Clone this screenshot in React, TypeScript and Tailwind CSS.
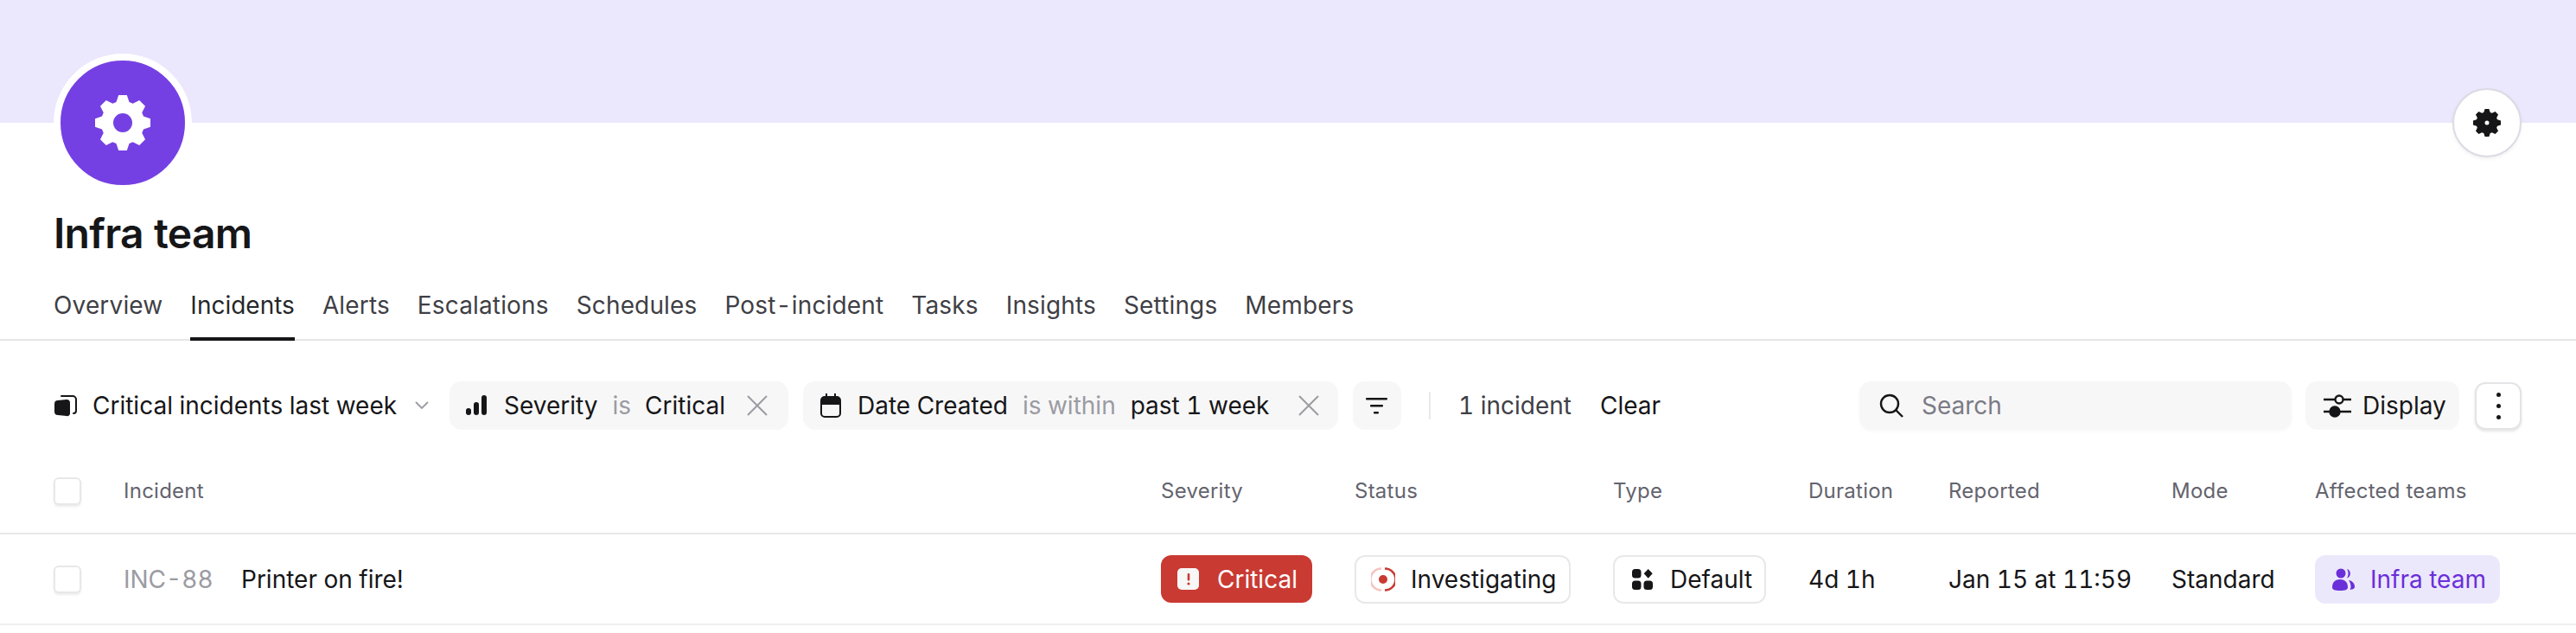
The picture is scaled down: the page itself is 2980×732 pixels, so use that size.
function gearPath(cx: number, cy: number, outer: number, root: number, tooth: number) {
  // 8 teeth, drawn clockwise from the top
  const pts: string[] = [];
  for (let i = 0; i < 8; i++) {
    const a = (i * Math.PI) / 4 - Math.PI / 2;
    const along = (r: number, s: number) => [
      cx + r * Math.cos(a) - s * Math.sin(a),
      cy + r * Math.sin(a) + s * Math.cos(a),
    ];
    [along(root, -tooth * 1.25), along(outer, -tooth * 0.8), along(outer, tooth * 0.8), along(root, tooth * 1.25)].forEach((p) =>
      pts.push(p.map((n) => n.toFixed(2)).join(" ")),
    );
  }
  return "M" + pts.join("L") + "Z";
}

function Gear({ className, hole }: { className: string; hole: number }) {
  return (
    <svg viewBox="0 0 64 64" className={className} fill="currentColor">
      <path fillRule="evenodd" d={gearPath(32, 32, 32, 24, 6) + ` M${32 - hole} 32a${hole} ${hole} 0 1 0 ${hole * 2} 0a${hole} ${hole} 0 1 0 ${-hole * 2} 0Z`} />
    </svg>
  );
}

function CloseIcon() {
  return (
    <svg viewBox="0 0 24 24" className="h-[24px] w-[24px] text-[#9b9ba3]" fill="none" stroke="currentColor" strokeWidth="2">
      <path d="M1 1l22 22M23 1L1 23" />
    </svg>
  );
}

function Checkbox() {
  return <div className="h-[32px] w-[32px] rounded-[6px] border-2 border-[#e8e8e8] bg-white shadow-[0_2px_3px_rgba(0,0,0,0.08)]" />;
}

const tabs = ["Overview", "Incidents", "Alerts", "Escalations", "Schedules", "Post-incident", "Tasks", "Insights", "Settings", "Members"];
const columns = ["Severity", "Status", "Type", "Duration", "Reported", "Mode", "Affected teams"];

export default function App() {
  return (
    <div className="h-[732px] w-[2980px] overflow-hidden bg-white font-[Inter,sans-serif] text-[28px] tabular-nums text-[#161618]">
      <div className="h-[142px] bg-[#ebe7fc]" />

      {/* Team header */}
      <div className="flex items-start justify-between pl-[62px] pr-[63px]">
        <div className="-mt-[80px] flex h-[160px] w-[160px] items-center justify-center rounded-full border-[8px] border-white bg-[#7540e3] text-white">
          <Gear className="h-[64px] w-[64px]" hole={11} />
        </div>
        <div className="-mt-[40px] flex h-[80px] w-[80px] items-center justify-center rounded-full border-2 border-[#dcdae4] bg-white shadow-[0_2px_4px_rgba(0,0,0,0.06)]">
          <Gear className="h-[32px] w-[32px]" hole={5} />
        </div>
      </div>
      <h1 className="-mt-[4px] pl-[62px] pt-[24px] text-[48px] font-semibold leading-[56px] tracking-[-0.015em]">Infra team</h1>

      {/* Tabs */}
      <div className="mt-[34px] flex h-[62px] gap-[32px] border-b-2 border-[#e6e6e6] px-[62px]">
        {tabs.map((tab) => (
          <div
            key={tab}
            className={
              tab === "Incidents"
                ? "-mb-[2px] h-[62px] border-b-[4px] border-[#161618] pt-[1px] leading-[40px] text-[#27272a]"
                : "pt-[1px] leading-[40px] tracking-[0.15px] text-[#3f3f46]"
            }
          >
            {tab}
          </div>
        ))}
      </div>

      {/* Filters */}
      <div className="mt-[47px] flex h-[56px] items-center pl-[62px] pr-[63px]">
        <svg viewBox="0 0 28 28" className="mr-[17px] h-[28px] w-[28px] shrink-0">
          <path d="M9 3h13a4 4 0 0 1 4 4v13a3 3 0 0 1-3 3" fill="none" stroke="#161618" strokeWidth="2" strokeLinecap="round" />
          <path d="M5 8l10-1a4 4 0 0 1 4 4v12a3 3 0 0 1-4 3l-10-1a4 4 0 0 1-4-4v-9a4 4 0 0 1 4-4Z" fill="#161618" />
        </svg>
        <span className="w-[353px] shrink-0 whitespace-nowrap">Critical incidents last week</span>
        <svg viewBox="0 0 16 10" className="ml-[20px] mr-[24px] h-[10px] w-[16px] shrink-0" fill="none" stroke="#9b9ba3" strokeWidth="1.8">
          <path d="M1 1l7 7 7-7" />
        </svg>

        <div className="flex h-[56px] w-[392px] shrink-0 items-center rounded-[14px] bg-[#f7f7f7] pl-[19px]">
          <svg viewBox="0 0 24 24" className="mr-[20px] h-[24px] w-[24px] shrink-0" fill="#161618">
            <rect x="0" y="15" width="6" height="8" rx="3" />
            <rect x="9" y="8" width="6" height="15" rx="3" />
            <rect x="18" y="0" width="6" height="23" rx="3" />
          </svg>
          <span>Severity</span>
          <span className="ml-[17px] text-[#9b9ba3]">is</span>
          <span className="ml-[16px]">Critical</span>
          <span className="ml-[25px]"><CloseIcon /></span>
        </div>

        <div className="ml-[17px] flex h-[56px] w-[619px] shrink-0 items-center rounded-[14px] bg-[#f7f7f7] pl-[20px]">
          <svg viewBox="0 0 24 28" className="mr-[19px] h-[28px] w-[24px] shrink-0">
            <path d="M6 0h2v5H6zM16 0h2v5h-2z" fill="#161618" />
            <rect x="1" y="4" width="22" height="23" rx="4" fill="none" stroke="#161618" strokeWidth="2" />
            <path d="M1 8a4 4 0 0 1 4-4h14a4 4 0 0 1 4 4v5H1z" fill="#161618" />
          </svg>
          <span>Date Created</span>
          <span className="ml-[17px] text-[#9b9ba3]">is within</span>
          <span className="ml-[17px]">past 1 week</span>
          <span className="ml-[34px]"><CloseIcon /></span>
        </div>

        <div className="ml-[17px] flex h-[56px] w-[56px] shrink-0 items-center justify-center rounded-[14px] bg-[#f7f7f7]">
          <svg viewBox="0 0 26 20" className="h-[20px] w-[26px]" fill="#161618">
            <rect x="0" y="1" width="25" height="2.4" rx="1" />
            <rect x="5" y="9" width="15" height="2.4" rx="1" />
            <rect x="9" y="17" width="6" height="2.4" rx="1" />
          </svg>
        </div>
        <div className="ml-[32px] h-[32px] w-[2px] shrink-0 bg-[#e8e8e8]" />
        <span className="ml-[32px] text-[#3f3f46]">1 incident</span>
        <span className="ml-[33px]">Clear</span>

        <div className="ml-auto flex h-[56px] w-[500px] shrink-0 items-center rounded-[14px] bg-[#f7f7f7] pl-[23px] shadow-[0_2px_4px_rgba(0,0,0,0.03)]">
          <svg viewBox="0 0 28 28" className="mr-[21px] h-[28px] w-[28px] shrink-0" fill="none" stroke="#161618" strokeWidth="2.4">
            <circle cx="12" cy="12" r="10" />
            <path d="M19 19l8 8" />
          </svg>
          <span className="text-[#7b7b86]">Search</span>
        </div>
        <div className="ml-[16px] flex h-[56px] w-[178px] shrink-0 items-center rounded-[14px] bg-[#f7f7f7] pl-[21px]">
          <svg viewBox="0 0 32 28" className="mr-[13px] h-[28px] w-[32px] shrink-0" fill="none" stroke="#161618" strokeWidth="2.4">
            <path d="M0 7h13M23 7h9M0 21h8M18 21h14" />
            <circle cx="18" cy="7" r="4.500" />
            <circle cx="13" cy="21" r="5.500" fill="#161618" />
          </svg>
          <span>Display</span>
        </div>
        <div className="ml-[18px] flex h-[55px] w-[54px] shrink-0 flex-col items-center justify-center gap-[8px] rounded-[12px] border-2 border-[#e4e4e7] bg-white shadow-[0_2px_3px_rgba(0,0,0,0.1)]">
          <div className="h-[5px] w-[5px] rounded-full bg-[#161618]" />
          <div className="h-[5px] w-[5px] rounded-full bg-[#161618]" />
          <div className="h-[5px] w-[5px] rounded-full bg-[#161618]" />
        </div>
      </div>

      {/* Table header */}
      <div className="mt-[31px] grid h-[90px] grid-cols-[81px_1200px_224px_299px_226px_162px_258px_166px_1fr] items-center border-b-2 border-[#e8e8e8] px-[62px] pb-[8px] text-[24px] tracking-[0.25px] text-[#64646e]">
        <Checkbox />
        <div>Incident</div>
        {columns.map((col) => (
          <div key={col}>{col}</div>
        ))}
      </div>

      {/* Row */}
      <div className="grid h-[105px] grid-cols-[81px_1200px_224px_299px_226px_162px_258px_166px_1fr] items-center border-b-2 border-[#f0f0f0] px-[62px]">
        <Checkbox />
        <div className="flex items-center">
          <span className="w-[136px] text-[#9b9ba3]">INC-88</span>
          <span>Printer on fire!</span>
        </div>
        <div>
          <div className="flex h-[55px] w-[175px] items-center rounded-[12px] bg-[#c93a32] pl-[19px] text-white">
            <div className="mr-[21px] flex h-[25px] w-[25px] items-center justify-center rounded-[5px] bg-[#f7f7f7]">
              <svg viewBox="0 0 4 14" className="h-[14px] w-[4px]" fill="#c93a32">
                <rect x="0.7" y="0" width="2.6" height="8.5" rx="1" />
                <circle cx="2" cy="12" r="1.6" />
              </svg>
            </div>
            Critical
          </div>
        </div>
        <div>
          <div className="flex h-[56px] w-[250px] items-center rounded-[12px] border-2 border-[#e8e8e8] pl-[17px]">
            <svg viewBox="0 0 28 28" className="mr-[18px] h-[28px] w-[28px] shrink-0" fill="none" strokeWidth="2.6">
              <path d="M12 1.500a12.500 12.500 0 0 0 0 25" stroke="#f3c4c0" />
              <path d="M16 1.500a12.500 12.500 0 0 1 0 25" stroke="#c93a32" />
              <circle cx="14" cy="14" r="5" fill="#c93a32" stroke="none" />
            </svg>
            Investigating
          </div>
        </div>
        <div>
          <div className="flex h-[56px] w-[177px] items-center rounded-[12px] border-2 border-[#e8e8e8] pl-[20px]">
            <svg viewBox="0 0 24 24" className="mr-[20px] h-[24px] w-[24px] shrink-0" fill="#161618">
              <rect x="0" y="0" width="10.5" height="10.5" rx="3.5" />
              <rect x="0" y="13.5" width="10.5" height="10.5" rx="3.5" />
              <rect x="13.5" y="13.5" width="10.5" height="10.5" rx="3.5" />
              <path d="M18.7 0l5 5.300-5 5.500-5-5.500z" />
            </svg>
            Default
          </div>
        </div>
        <div>4d 1h</div>
        <div>Jan 15 at 11:59</div>
        <div>Standard</div>
        <div>
          <div className="flex h-[56px] w-[214px] items-center rounded-[12px] bg-[#ece8fc] pl-[20px] text-[#6b2fd9]">
            <svg viewBox="0 0 26 26" className="mr-[18px] h-[26px] w-[26px] shrink-0" fill="#6b2fd9">
              <circle cx="10" cy="6" r="5.500" />
              <path d="M0 22c0-6 4-9 9-9s9 3 9 9c0 3-3 4-9 4s-9-1-9-4Z" />
              <path d="M17 1a5.500 5.500 0 0 1 0 10.500c1-1.500 1.500-3.500 1.500-5.200S18 2.500 17 1Z" />
              <path d="M19 14c4 .5 7 3.500 7 7.500 0 2-1.500 3-5.500 3.300.7-1 1-2 1-3.300 0-2.800-.9-5.500-2.500-7.500Z" />
            </svg>
            Infra team
          </div>
        </div>
      </div>
    </div>
  );
}
